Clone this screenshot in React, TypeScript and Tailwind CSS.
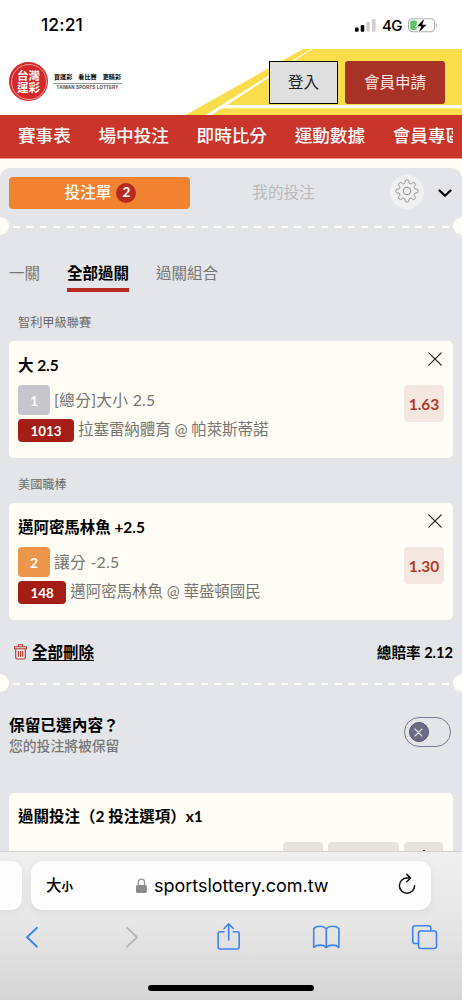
import type { ReactNode } from "react";

interface Bet {
  league: string;
  title: string;
  index: string;
  indexClass: string;
  market: string;
  code: string;
  match: string;
  odds: string;
}

const navItems = ["賽事表", "場中投注", "即時比分", "運動數據", "會員專區"];

const bets: Bet[] = [
  {
    league: "智利甲級聯賽",
    title: "大 2.5",
    index: "1",
    indexClass: "bg-[#c7c6cc]",
    market: "[總分]大小 2.5",
    code: "1013",
    match: "拉塞雷納體育 @ 帕萊斯蒂諾",
    odds: "1.63",
  },
  {
    league: "美國職棒",
    title: "邁阿密馬林魚 +2.5",
    index: "2",
    indexClass: "bg-[#ec964b]",
    market: "讓分 -2.5",
    code: "148",
    match: "邁阿密馬林魚 @ 華盛頓國民",
    odds: "1.30",
  },
];

function StatusBar() {
  return (
    <div className="flex h-[49px] shrink-0 items-start justify-between bg-white pl-[41px] pr-[24px] font-['Inter','Liberation_Sans',sans-serif] text-black">
      <span className="mt-[13px] text-[17.5px] leading-[24px] font-medium tracking-[0.1px]">12:21</span>
      <div className="mt-[17px] flex h-[17px] items-center">
        <svg width="21" height="13" viewBox="0 0 21 13">
          <rect x="0" y="8.5" width="3.6" height="4.2" rx="1" />
          <rect x="5.7" y="6" width="3.6" height="6.7" rx="1" />
          <rect x="11.3" y="3" width="3.6" height="9.7" rx="1" fill="#cfcfcf" />
          <rect x="17" y="0" width="3.6" height="12.7" rx="1" fill="#cfcfcf" />
        </svg>
        <span className="ml-[6px] w-[20px] text-[15px] leading-none font-medium tracking-[-0.6px]">4G</span>
        <svg className="ml-[6px]" width="30" height="15" viewBox="0 0 30 15">
          <rect x="0.6" y="0.8" width="26" height="13" rx="4" fill="none" stroke="#aaa" strokeWidth="1.1" />
          <path d="M28 5.3v4c1.3-.6 1.3-3.4 0-4z" fill="#aaa" />
          <rect x="2.3" y="2.5" width="6.5" height="9.6" rx="1.8" fill="#5ec466" />
          <path d="M16.4.8 9 8.3h4.3L10.8 14.2 18.6 6.7h-4.4z" fill="#000" stroke="#fff" strokeWidth="2" paintOrder="stroke" />
        </svg>
      </div>
    </div>
  );
}

function Logo() {
  return (
    <div className="flex items-center">
      <div className="flex h-[39px] w-[39px] items-center justify-center rounded-full bg-[#d5282a] p-[1.5px]">
        <div className="flex h-full w-full flex-col items-center justify-center rounded-full border border-[#f0a09c] text-[11.5px] leading-[11.5px] font-bold text-white">
          <span>台灣</span>
          <span>運彩</span>
        </div>
      </div>
      <div className="ml-[5px] w-[69px] text-black">
        <div className="flex justify-between border-b border-[#999] px-px pb-[2px] text-[6.1px] leading-[8px] font-bold">
          <span>買運彩</span>
          <span>看比賽</span>
          <span>更精彩</span>
        </div>
        <div className="pt-[1px] text-center font-['Liberation_Sans',sans-serif] text-[4.5px] leading-[6px] font-bold tracking-[0.12px] whitespace-nowrap text-[#444]">
          TAIWAN SPORTS LOTTERY
        </div>
      </div>
    </div>
  );
}

function Header() {
  return (
    <header className="relative h-[66px] shrink-0 bg-white">
      <svg className="absolute inset-0" width="462" height="66" viewBox="0 0 462 66">
        <path d="M185.5 66 303 0H462V66z" fill="#fadd4a" />
        <path d="M205.500 66 311 0H312.500L211.500 66z" fill="#fff" />
        <path d="M226 56H462V59.200H221z" fill="#fff" />
        <path d="M211.500 66 226 56V59.200H221z" fill="#fff" />
      </svg>
      <div className="relative flex items-start pl-[9px]">
        <div className="mt-[13px]">
          <Logo />
        </div>
        <button className="mt-[12px] ml-[147px] h-[43px] w-[69px] border border-black bg-[#dfdfdf] text-[15.5px] text-[#222]">登入</button>
        <button className="mt-[12px] ml-[7px] h-[43px] w-[100px] rounded-[3px] bg-[#a93226] text-[15.5px] text-[#fbe9e7]">會員申請</button>
      </div>
    </header>
  );
}

function Perforation() {
  return (
    <div className="flex h-[18px] shrink-0 items-center justify-between overflow-hidden">
      <div className="-ml-[9px] h-[18px] w-[18px] shrink-0 rounded-full bg-[#fffdf5]" />
      <div className="mt-[2px] ml-[4px] h-[2px] flex-1 bg-[repeating-linear-gradient(90deg,#fffdf5_0_7px,transparent_7px_13.4px)]" />
      <div className="-mr-[9px] h-[18px] w-[18px] shrink-0 rounded-full bg-[#fffdf5]" />
    </div>
  );
}

function CloseIcon() {
  return (
    <svg width="14" height="14" viewBox="0 0 14 14" fill="none" stroke="#1c1c1c" strokeWidth="1.2" strokeLinecap="round">
      <path d="M.8.8l12.4 12.4M13.2.8.8 13.2" />
    </svg>
  );
}

function BetCard({ bet }: { bet: Bet }) {
  return (
    <section>
      <h3 className="pl-[18px] text-[12.2px] leading-[18px] text-[#6a6a6a]">{bet.league}</h3>
      <div className="mx-[9px] mt-[9px] flex h-[117px] justify-between rounded-[5px] bg-[#fffdf5] px-[9px]">
        <div>
          <div className="mt-[13px] text-[15.5px] leading-[22px] font-bold tracking-[-0.05px] text-black">{bet.title}</div>
          <div className="mt-[9px] flex h-[30px] items-center">
            <span className={`flex h-[30px] w-[32px] items-center justify-center rounded-[4px] text-[14px] font-bold text-white ${bet.indexClass}`}>
              {bet.index}
            </span>
            <span className="ml-[4px] text-[15.8px] tracking-[0.25px] text-[#777672]">{bet.market}</span>
          </div>
          <div className="mt-[4px] flex h-[23px] items-center">
            <span className="flex h-[23px] items-center rounded-[4px] bg-[#a41e17] px-[12.5px] pt-px text-[13.4px] font-bold text-white">{bet.code}</span>
            <span className="-mt-[1px] ml-[4px] text-[15.5px] tracking-[-0.08px] text-[#777672]">{bet.match}</span>
          </div>
        </div>
        <div className="flex flex-col items-end">
          <button className="mt-[11px] mr-[2px] h-[14px]">
            <CloseIcon />
          </button>
          <div className="mt-[19px] flex h-[37px] w-[40px] items-center justify-center rounded-[4px] bg-[#f4e7df] pt-[2px] text-[15.5px] font-bold text-[#b23a2e]">
            {bet.odds}
          </div>
        </div>
      </div>
    </section>
  );
}

// eight soft teeth around the hub
const gearPoints = Array.from({ length: 160 }, (_, i) => {
  const a = (i / 160) * Math.PI * 2;
  const r = 9.5 + 1.6 * Math.tanh(2.6 * Math.cos(8 * a));
  return `${(12 + r * Math.cos(a)).toFixed(2)},${(12 + r * Math.sin(a)).toFixed(2)}`;
}).join(" ");

function GearIcon() {
  return (
    <svg className="-mt-[3px]" width="24" height="24" viewBox="0 0 24 24" fill="none" stroke="#858585" strokeWidth="0.9" strokeLinejoin="round">
      <polygon points={gearPoints} />
      <circle cx="12" cy="12" r="3.8" />
    </svg>
  );
}

function ToolIcon({ children, color = "#3d82f6" }: { children: ReactNode; color?: string }) {
  return (
    <svg width="30" height="30" viewBox="0 0 30 30" fill="none" stroke={color} strokeWidth="1.6" strokeLinecap="round" strokeLinejoin="round">
      {children}
    </svg>
  );
}

function BrowserBar() {
  return (
    <footer className="flex h-[149px] shrink-0 flex-col border-t border-[#d2d2cf] bg-linear-to-b from-[#efefef] via-[#e6e6e6] to-[#d6d5d5] font-['Inter','Liberation_Sans','Noto_Sans_CJK_TC',sans-serif]">
      <div className="mt-[9px] flex h-[49px]">
        <div className="h-[49px] w-[22px] rounded-r-[11px] bg-[#fdfdfd] shadow-[0_2px_8px_rgba(0,0,0,0.06)]" />
        <div className="ml-[9px] flex h-[49px] w-[400px] items-center rounded-[12px] bg-[#fdfdfd] px-[15px] text-black shadow-[0_2px_8px_rgba(0,0,0,0.06)]">
          <span className="w-[28px] text-[15.5px] leading-none font-medium whitespace-nowrap">
            大<span className="text-[11.5px] font-bold">小</span>
          </span>
          <svg className="ml-[61px]" width="13" height="16" viewBox="0 0 13 16">
            <path d="M3.3 8V4.3a3.1 3.1 0 0 1 6.2 0V8" fill="none" stroke="#98989c" strokeWidth="1.3" />
            <rect x="1" y="7" width="10.8" height="8" rx="1.6" fill="#8a8a8e" />
          </svg>
          <span className="ml-[6px] font-['Inter','Liberation_Sans',sans-serif] text-[18px] leading-none tracking-[-0.02px] whitespace-nowrap">sportslottery.com.tw</span>
          <svg className="-mt-[3px] ml-auto" width="18" height="22" viewBox="0 0 18 22" fill="none" stroke="#111" strokeWidth="1.5" strokeLinecap="round" strokeLinejoin="round">
            <path d="M12.3 5.1H9A7.6 7.6 0 1 0 16.6 12.7M8.800 1.400l3.700 3.700-3.700 3.600" />
          </svg>
        </div>
      </div>
      <div className="mt-[12px] flex h-[30px] justify-between pr-[23px] pl-[17px]">
        <ToolIcon>
          <path d="M20 5.800 10 15.300 20 24.800" strokeWidth="1.900" />
        </ToolIcon>
        <ToolIcon color="#b7b7b9">
          <path d="M12 5.800l10 9.500-10 9.500" strokeWidth="1.900" />
        </ToolIcon>
        <ToolIcon>
          <path d="M11 9.700H7.100a2 2 0 0 0-2 2V25a2 2 0 0 0 2 2h17.100a2 2 0 0 0 2-2V11.700a2 2 0 0 0-2-2h-3.900M15.700 18V2M11.100 6.500l4.600-4.600 4.600 4.600" />
        </ToolIcon>
        <ToolIcon>
          <path d="M15.300 6.700C12.300 3.400 6 3.500 2.700 6.300V25.300c3.300-2.900 9.600-2.900 12.600 0 3-2.900 9.600-2.900 12.600 0V6.300C24.600 3.500 18.300 3.400 15.300 6.700zV25.300" />
        </ToolIcon>
        <ToolIcon>
          <rect x="9.500" y="9" width="18" height="17.500" rx="2.400" />
          <path d="M9.300 21.500H6a2.300 2.300 0 0 1-2.300-2.300V6A2.300 2.300 0 0 1 6 3.700h13.600A2.300 2.300 0 0 1 21.900 6v2.800" />
        </ToolIcon>
      </div>
      <div className="mx-auto mt-[33px] h-[6px] w-[166px] rounded-full bg-black" />
    </footer>
  );
}

export default function App() {
  return (
    <div className="flex h-[1000px] w-[462px] flex-col overflow-hidden bg-[#fffdf5] font-['Lato','Noto_Sans_CJK_TC',sans-serif]">
      <StatusBar />
      <Header />
      <nav className="h-[44px] shrink-0 border-b border-[#eb9c92] bg-[#c9342b] pr-[9px] pl-[18px]">
        <div className="flex h-[43px] items-center gap-[27.7px] overflow-hidden text-[17.6px] font-medium whitespace-nowrap text-white">
          {navItems.map((item) => (
            <span key={item}>{item}</span>
          ))}
        </div>
      </nav>

      <main className="mt-[9px] flex min-h-0 flex-1 flex-col overflow-hidden rounded-t-[10px] bg-[#e4e5e8]">
        <div className="flex h-[49px] shrink-0 items-center pl-[9px]">
          <button className="flex h-[32px] w-[181px] items-center justify-center rounded-[4px] bg-[#f08232] pl-[2px] text-[15.6px] font-medium text-white">
            投注單
            <span className="ml-[5px] flex h-[20px] w-[20px] items-center justify-center rounded-full bg-[#b52b20] text-[13.5px] font-bold">2</span>
          </button>
          <button className="w-[187px] text-center text-[15.6px] text-[#b9b9bb]">我的投注</button>
          <div className="-mt-px ml-[13px] flex h-[34px] w-[34px] items-center justify-center rounded-full bg-[#f1f1f1]">
            <GearIcon />
          </div>
          <svg className="mt-[2px] ml-[14px]" width="14" height="9" viewBox="0 0 14 9" fill="none" stroke="#000" strokeWidth="2.2" strokeLinecap="round" strokeLinejoin="round">
            <path d="M1.5 1.5 7 6.8l5.500-5.300" />
          </svg>
        </div>
        <Perforation />

        <div className="mt-[25px] flex h-[32px] shrink-0 items-start gap-[27px] pl-[9px] text-[15.5px] leading-[26px] text-[#777]">
          <span>一關</span>
          <span className="h-[32px] border-b-[4px] border-[#b52b24] font-bold text-black">全部過關</span>
          <span>過關組合</span>
        </div>

        <div className="mt-[22px] flex shrink-0 flex-col gap-[18px]">
          {bets.map((bet) => (
            <BetCard key={bet.code} bet={bet} />
          ))}
        </div>

        <div className="mt-[21px] flex h-[24px] shrink-0 items-center justify-between pr-[9px] pl-[14px] text-[15.5px] font-bold text-black">
          <div className="flex items-center gap-[5px]">
            <svg className="-mt-[3px]" width="13" height="16" viewBox="0 0 13 16" fill="none" stroke="#b83a32" strokeWidth="1.1" strokeLinejoin="round">
              <path d="M.6 2.800h11.800v2H.6zM4.300 2.600V.8h4.400v1.800M1.700 5v8.500c0 .9.6 1.500 1.500 1.500h6.600c.9 0 1.500-.6 1.500-1.500V5M4.400 7v5.800M6.500 7v5.800M8.600 7v5.800" />
            </svg>
            <span className="underline decoration-1 underline-offset-[2px]">全部刪除</span>
          </div>
          <span className="text-[14.6px]">總賠率 2.12</span>
        </div>
        <div className="mt-[9px] shrink-0">
          <Perforation />
        </div>

        <div className="mt-[21px] flex h-[46px] shrink-0 justify-between pr-[11px] pl-[9px]">
          <div>
            <div className="text-[15.7px] leading-[24px] font-bold text-black">保留已選內容？</div>
            <div className="text-[13.8px] leading-[18px] font-medium text-[#777]">您的投注將被保留</div>
          </div>
          <div className="mt-[4px] flex h-[30px] w-[47px] items-center rounded-full border border-[#7b7894] pl-[3.5px]">
            <div className="flex h-[20px] w-[20px] items-center justify-center rounded-full border border-[#555172] bg-[#6d6b84]">
              <svg width="9" height="9" viewBox="0 0 9 9" stroke="#e4e5e8" strokeWidth="1.1" strokeLinecap="round">
                <path d="M1 1l7 7M8 1 1 8" />
              </svg>
            </div>
          </div>
        </div>

        <div className="mx-[9px] mt-[34px] flex min-h-0 flex-1 flex-col overflow-hidden rounded-t-[5px] bg-[#fffdf5]">
          <div className="mt-[12px] shrink-0 pl-[9px] text-[15.5px] leading-[22px] font-bold text-black">過關投注（2 投注選項）x1</div>
          <div className="mt-[15px] flex h-[36px] shrink-0 justify-end gap-[5px] pr-[10px]">
            <div className="w-[39.5px] rounded-[4px] bg-[#e6e4dd]" />
            <div className="w-[71.5px] rounded-[4px] bg-[#e6e4dd]" />
            <div className="flex w-[39px] justify-center rounded-[4px] bg-[#e6e4dd] pt-[8px]">
              <div className="h-[14px] w-[2px] bg-[#444]" />
            </div>
          </div>
        </div>
      </main>
      <BrowserBar />
    </div>
  );
}
